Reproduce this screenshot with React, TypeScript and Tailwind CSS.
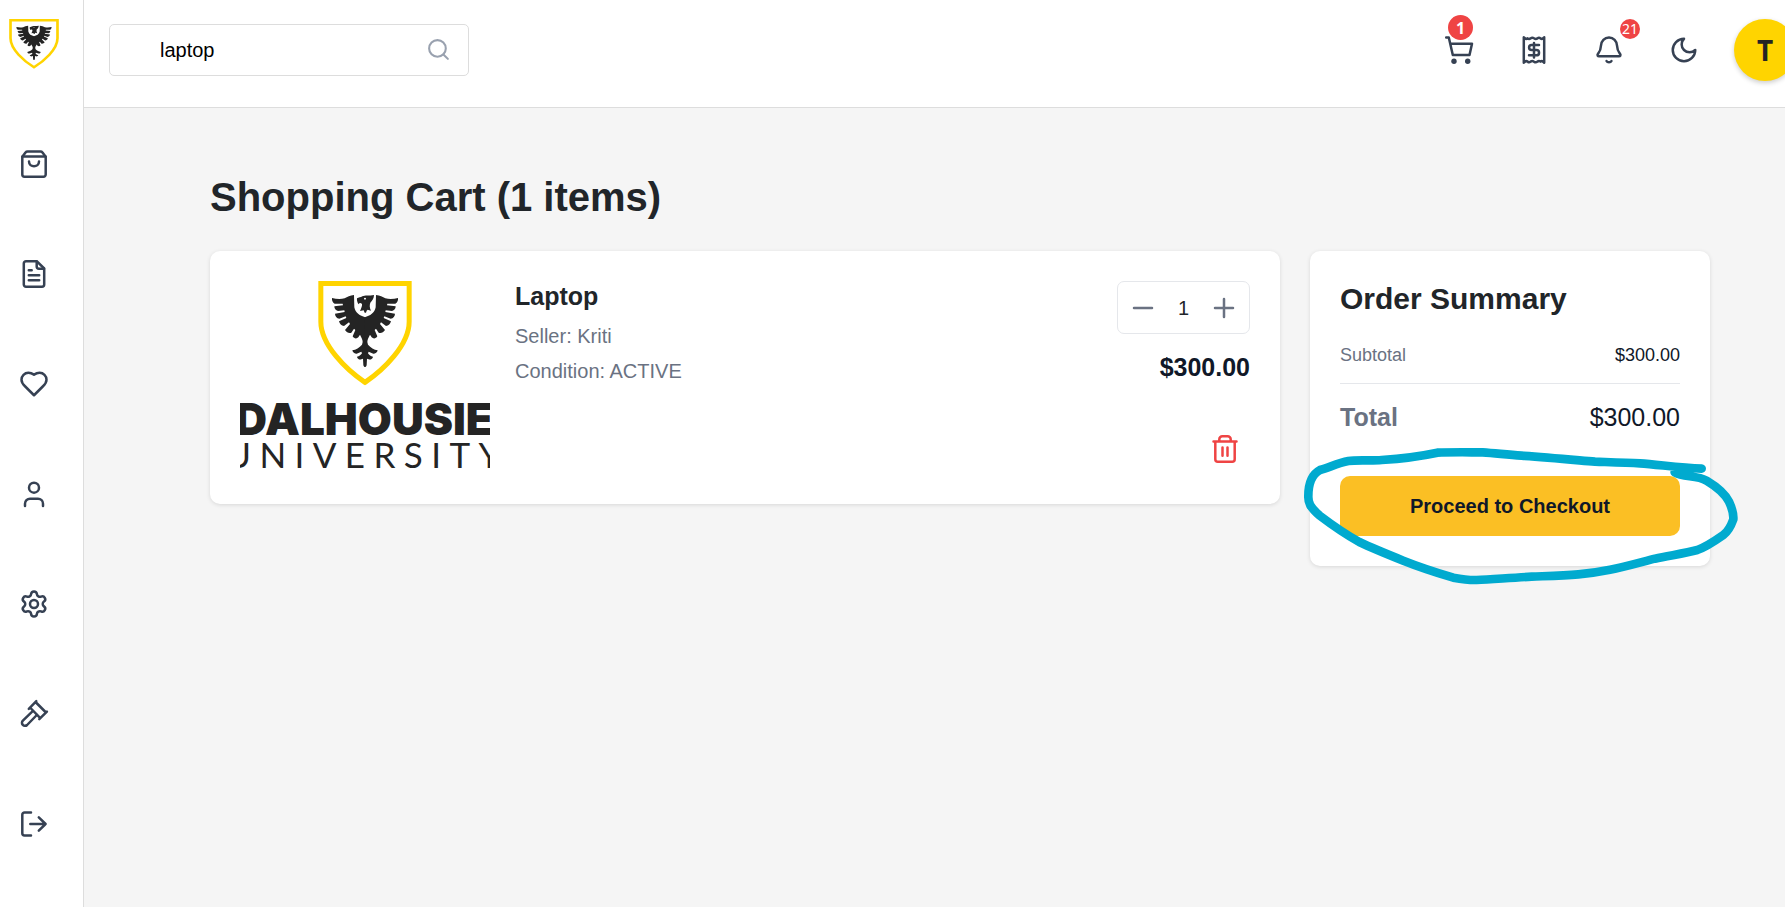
import type { ReactNode } from "react";

function Icon({ children }: { children: ReactNode }) {
  return (
    <svg
      viewBox="0 0 30 30"
      className="block size-[30px]"
      fill="none"
      stroke="currentColor"
      strokeWidth="2.500"
      strokeLinecap="round"
      strokeLinejoin="round"
      aria-hidden="true"
    >
      {children}
    </svg>
  );
}

const HALF_EAGLE =
  "M195.500 142 C180 137 166 130 163 112 L162 75 C150 76 142 80 134 85 C122 88 108 87 96 84 C95 91 98 98 104 101 L128 101 L129 106 L103 109 C103 116 107 122 114 123 L133 121 L134 126 L105 131 C105 138 110 145 118 146 L137 139 L139 144 L117 154 C119 162 124 168 132 168 L147 157 L150 162 L135 180 C140 188 148 191 154 188 L162 176 L166 180 L158 199 C162 206 170 207 175 202 L180 194 C184 202 188 208 188 216 L186 224 C178 233 168 239 157 241 C158 247 163 252 170 251 L184 245 L186 250 C182 256 178 259 171 260 C172 266 178 270 184 268 L189 266 L190 285 C191 290 193 291 195.500 291 Z";

function Crest() {
  return (
    <g>
      <path
        d="M62.500 40.500 H327.500 V155 C327.500 225 250 300 195 337 C140 300 62.500 225 62.500 155 Z"
        fill="#fff"
        stroke="#ffd400"
        strokeWidth="15"
      />
      <g fill="#242424">
        <path d={HALF_EAGLE} />
        <path d={HALF_EAGLE} transform="translate(390 0) scale(-1 1)" />
        <path
          fillRule="evenodd"
          d="M171 85 C176 82 182 83 187 79 C194 75 208 78 222 75 C222 84 217 92 211 98 C208 106 209 114 213 122 L203 119 L200 122 L198 128 L194 128 L191 121 L180 123 C184 115 187 107 186 102 C182 98 178 98 176 103 C172 98 170 91 171 85 Z M192 86 a3 2.500 0 1 0 6 0 a3 2.500 0 1 0 -6 0 Z"
        />
      </g>
    </g>
  );
}

const navItems: { label: string; art: ReactNode }[] = [
  {
    label: "Shop",
    art: (
      <>
        <path d="M3.300 7.800 6.500 3.500Q7.300 2.500 8.500 2.500H21.500Q22.700 2.500 23.500 3.500L26.700 7.800V25.500a2.200 2.200 0 0 1-2.200 2.200H5.500a2.200 2.200 0 0 1-2.200-2.200Z" />
        <path d="M3.500 7.500H26.500M10 12.500c0 6.400 10 6.400 10 0" />
      </>
    ),
  },
  {
    label: "Orders",
    art: (
      <>
        <path d="M17.700 2.200H7a2.200 2.200 0 0 0-2.200 2.200V25.600A2.200 2.200 0 0 0 7 27.800H23a2.200 2.200 0 0 0 2.200-2.200V9.500Z" />
        <path d="M17.700 2.400V7.500a2.200 2.200 0 0 0 2.200 2.200H25M9.800 11.300H12.700M9.800 16.300H20.200M9.800 21.300H20.200" />
      </>
    ),
  },
  {
    label: "Wishlist",
    art: (
      <path
        transform="scale(1.25)"
        strokeWidth="2"
        d="M19 14c1.490-1.460 3-3.210 3-5.500A5.500 5.500 0 0 0 16.500 3c-1.760 0-3 .5-4.500 1.500C10.500 3.500 9.260 3 7.500 3A5.500 5.500 0 0 0 2 8.500c0 2.300 1.500 4.050 3 5.500l7 7Z"
      />
    ),
  },
  {
    label: "Profile",
    art: (
      <>
        <circle cx="15" cy="8.700" r="5" />
        <path d="M6 27V24.700a5 5 0 0 1 5-5H19a5 5 0 0 1 5 5V27" />
      </>
    ),
  },
  {
    label: "Settings",
    art: (
      <g transform="scale(1.25)" strokeWidth="2">
        <path d="M9.671 4.136a2.340 2.340 0 0 1 4.659 0 2.340 2.340 0 0 0 3.319 1.915 2.340 2.340 0 0 1 2.330 4.033 2.340 2.340 0 0 0 0 3.831 2.340 2.340 0 0 1-2.330 4.033 2.340 2.340 0 0 0-3.319 1.915 2.340 2.340 0 0 1-4.659 0 2.340 2.340 0 0 0-3.320-1.915 2.340 2.340 0 0 1-2.330-4.033 2.340 2.340 0 0 0 0-3.831A2.340 2.340 0 0 1 6.350 6.051a2.340 2.340 0 0 0 3.319-1.915" />
        <circle cx="12" cy="12" r="3.200" />
      </g>
    ),
  },
  {
    label: "Auctions",
    art: (
      <>
        <path d="M9.800 9.800 17.300 2.200M20.300 20.200 27.900 12.600M11.500 9 20.800 18.700M17 3.500 26.500 13" />
        <path d="M13.700 12.200 3.900 21.600a3 3 0 0 0 4.200 4.400L17.800 16" />
      </>
    ),
  },
  {
    label: "Log out",
    art: (
      <path d="M12 3.500H5.500a2.200 2.200 0 0 0-2.200 2.200V24.300a2.200 2.200 0 0 0 2.200 2.200H12M11.300 15H26.600M19.800 8.400 26.600 15 19.800 21.600" />
    ),
  },
];

function Sidebar() {
  return (
    <aside className="flex w-[84px] shrink-0 flex-col items-center gap-20 border-r border-[#dddddd] bg-white pt-[19px] pr-[15px]">
      <a href="#home" aria-label="Dalhousie University home">
        <svg viewBox="54 33 282 315" preserveAspectRatio="none" className="block size-[50px]" aria-hidden="true">
          <Crest />
        </svg>
      </a>
      <nav className="flex flex-col gap-20 text-gray-700">
        {navItems.map((item) => (
          <a key={item.label} href="#nav" aria-label={item.label}>
            <Icon>{item.art}</Icon>
          </a>
        ))}
      </nav>
    </aside>
  );
}

function Header() {
  return (
    <header className="flex items-center justify-between overflow-hidden border-b border-[#dddddd] bg-white pt-[19px] pb-[26px] pl-[25px]">
      <div className="relative w-[360px]">
        <input
          type="text"
          aria-label="Search"
          defaultValue="laptop"
          className="block h-[52px] w-full rounded-[5px] border border-[#dddddd] bg-white pr-14 pl-[50px] text-[20px] text-black outline-none"
        />
        <svg
          viewBox="0 0 24 24"
          className="pointer-events-none absolute top-[13px] right-[18px] size-[25px] text-gray-400"
          fill="none"
          stroke="currentColor"
          strokeWidth="2"
          strokeLinecap="round"
          aria-hidden="true"
        >
          <circle cx="11" cy="11" r="8" />
          <path d="m21 21-4.300-4.300" />
        </svg>
      </div>
      <div className="-mr-[11px] flex items-center text-gray-700">
        <div className="flex items-center gap-[45px]">
          <button type="button" aria-label="Cart" className="relative">
            <Icon>
              <path d="M2.200 2.500H4.800L8.800 20H25.500L28 8.700H6.300" />
              <g fill="currentColor" stroke="none">
                <circle cx="10" cy="26.300" r="2.700" />
                <circle cx="23.700" cy="26.300" r="2.700" />
              </g>
            </Icon>
            <span className="absolute -top-5 left-1 flex size-[25px] items-center justify-center rounded-full bg-[#ef4444] font-['Noto_Sans',sans-serif] text-[16px] leading-none font-bold text-white">
              1
            </span>
          </button>
          <button type="button" aria-label="Receipts">
            <Icon>
              <path d="M4.800 2.200V27.800Q6.700 25.300 8.700 26.600Q10 28 11.600 26.600Q13.200 25.500 15 26.700Q16.800 28 18.400 26.600Q20 25.500 21.500 26.600Q23.300 25.300 25.200 27.800V2.200Q23.300 4.700 21.500 3.400Q20 2 18.400 3.400Q16.800 4.500 15 3.300Q13.200 2 11.600 3.400Q10 4.500 8.700 3.400Q6.700 4.700 4.800 2.200Z" />
              <path d="M15 8V22.500M20 10H12.600a2.500 2.500 0 0 0 0 5H17.400a2.600 2.600 0 0 1 0 5.300H10" />
            </Icon>
          </button>
          <button type="button" aria-label="Notifications" className="relative">
            <Icon>
              <path d="M15 2.500C10.500 2.500 7.200 6 7 10.500C6.800 15.500 5.700 16.700 4 18.800C3 20.200 3.800 21.300 5 21.300H25C26.200 21.300 27 20.200 26 18.800C24.300 16.700 23.200 15.500 23 10.500C22.800 6 19.500 2.500 15 2.500Z" />
              <path d="M12.500 26C13.500 27.800 16.500 27.800 17.500 26" />
            </Icon>
            <span className="absolute -top-4 -right-4 flex size-5 items-center justify-center rounded-full bg-[#ef4444] font-['Noto_Sans',sans-serif] text-[14px] leading-none text-white">
              21
            </span>
          </button>
          <button type="button" aria-label="Dark mode">
            <Icon>
              <path transform="scale(1.25)" strokeWidth="2" d="M12 3a6 6 0 0 0 9 9 9 9 0 1 1-9-9Z" />
            </Icon>
          </button>
        </div>
        <button
          type="button"
          aria-label="Account T"
          className="ml-[35px] flex size-[62px] items-center justify-center rounded-full bg-[#ffd400] font-['Noto_Sans',sans-serif] text-[28px] leading-none font-bold text-[#242424] shadow-[0_2px_5px_rgba(0,0,0,0.2)]"
        >
          T
        </button>
      </div>
    </header>
  );
}

function ProductPicture() {
  return (
    <svg viewBox="0 0 250 188" className="block h-[188px] w-[250px] shrink-0" role="img" aria-label="Dalhousie University">
      <svg x="78" y="0" width="94" height="105" viewBox="54 33 282 315">
        <Crest />
      </svg>
      <g fill="#242424" textAnchor="middle">
        <text x="124" y="154" className="font-['Inter',sans-serif] text-[44px] font-black">
          DALHOUSIE
        </text>
        <text x="127" y="187" className="font-['Lato',sans-serif] text-[35px] tracking-[0.24em]">
          UNIVERSITY
        </text>
      </g>
    </svg>
  );
}

function CartItem() {
  return (
    <article className="flex items-start gap-[25px] rounded-[10px] bg-white p-[30px] shadow-[0_1px_4px_rgba(0,0,0,0.12)]">
      <ProductPicture />
      <div className="flex-1 text-[20px] leading-[30px] text-gray-500">
        <h2 className="mb-[10px] text-[25px] font-bold text-[#212529]">Laptop</h2>
        <p className="mb-[5px]">Seller: Kriti</p>
        <p>Condition: ACTIVE</p>
      </div>
      <div className="flex flex-col items-end">
        <div className="flex h-[53px] w-[133px] items-center justify-between rounded-[7px] border border-gray-200 px-[10px] text-gray-500">
          <button type="button" aria-label="Decrease quantity">
            <Icon>
              <path d="M6 15H24" />
            </Icon>
          </button>
          <span className="text-[20px] text-[#212529]">1</span>
          <button type="button" aria-label="Increase quantity">
            <Icon>
              <path d="M6 15H24M15 6V24" />
            </Icon>
          </button>
        </div>
        <p className="mt-[18px] text-[25px] leading-[30px] font-bold text-gray-900">$300.00</p>
        <button type="button" aria-label="Remove item" className="mt-[42px] p-[10px] text-[#ef4444]">
          <Icon>
            <path d="M3.500 7.500H26.500M5.300 7.500V25.300a2.500 2.500 0 0 0 2.500 2.500H22.200a2.500 2.500 0 0 0 2.500-2.500V7.500M9.300 7V5.300a3 3 0 0 1 3-3H17.700a3 3 0 0 1 3 3V7M12.500 13.500V21.700M17.500 13.500V21.700" />
          </Icon>
        </button>
      </div>
    </article>
  );
}

function OrderSummary() {
  return (
    <section className="relative rounded-[10px] bg-white p-[30px] text-gray-900 shadow-[0_1px_4px_rgba(0,0,0,0.12)]">
      <h2 className="text-[30px] leading-9 font-bold text-[#212529]">Order Summary</h2>
      <dl>
        <div className="mt-[25px] flex justify-between border-b border-gray-200 pb-[15px] text-[18px] leading-[26px]">
          <dt className="text-gray-500">Subtotal</dt>
          <dd>$300.00</dd>
        </div>
        <div className="mt-[18px] flex justify-between text-[25px] leading-[30px]">
          <dt className="font-bold text-gray-500">Total</dt>
          <dd>$300.00</dd>
        </div>
      </dl>
      <button type="button" className="mt-[44px] h-[60px] w-full rounded-[10px] bg-[#fbbf24] text-[20px] font-bold">
        Proceed to Checkout
      </button>
      <svg
        viewBox="0 0 1380 1080"
        className="pointer-events-none absolute -top-[11px] -left-5 h-[360px] w-[460px]"
        fill="none"
        stroke="#00aacf"
        strokeWidth="26"
        strokeLinecap="round"
        strokeLinejoin="round"
        aria-hidden="true"
      >
        <path d="M1154 697C1180 713 1220 704 1250 722C1275 737 1306 762 1317 785C1324 800 1331 825 1330 838C1325 852 1315 874 1300 885C1280 899 1245 922 1222 930C1185 940 1135 947 1095 956C1055 966 1005 981 960 989C930 995 900 1000 865 1003C820 1007 775 1008 725 1010C665 1013 605 1018 560 1020C535 1021 512 1017 490 1013C440 998 385 980 340 962C295 944 250 926 208 906C165 882 125 854 88 826C60 801 54 788 55 768C55 735 64 704 90 690C120 681 145 669 175 663C200 659 245 663 275 660C335 656 390 649 442 638C480 636 535 637 578 637C620 640 650 644 695 647C770 652 845 659 915 665C975 667 1010 668 1050 670C1105 674 1170 683 1235 686" />
      </svg>
    </section>
  );
}

export default function App() {
  return (
    <div className="flex min-h-screen overflow-x-hidden bg-[#f5f5f5] font-['Liberation_Sans',Arial,sans-serif]">
      <Sidebar />
      <div className="min-w-0 flex-1">
        <Header />
        <main className="pt-[65px] pr-[75px] pb-10 pl-[126px]">
          <h1 className="mb-[30px] text-[40px] leading-[48px] font-bold text-[#212529]">Shopping Cart (1 items)</h1>
          <div className="grid grid-cols-[1fr_400px] items-start gap-[30px]">
            <CartItem />
            <OrderSummary />
          </div>
        </main>
      </div>
    </div>
  );
}
